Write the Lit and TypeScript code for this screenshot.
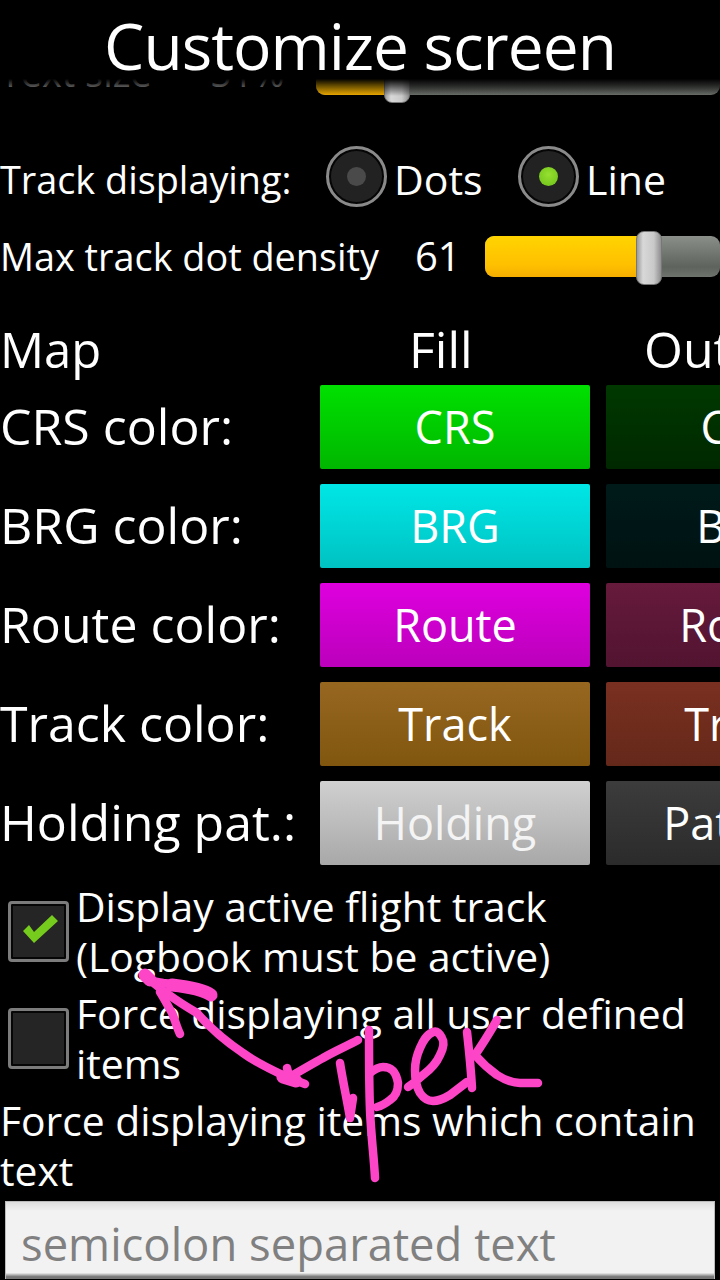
import { LitElement, html, css, svg } from "lit";
import { customElement } from "lit/decorators.js";

const rows = [
  { label: "CRS color:", a: "CRS", b: "CRS", ca: "c-crs", cb: "o-crs" },
  { label: "BRG color:", a: "BRG", b: "BRG", ca: "c-brg", cb: "o-brg" },
  { label: "Route color:", a: "Route", b: "Route", ca: "c-route", cb: "o-route" },
  { label: "Track color:", a: "Track", b: "Track", ca: "c-track", cb: "o-track" },
  { label: "Holding pat.:", a: "Holding", b: "Pattern", ca: "c-hold", cb: "o-hold" },
];

const strokes = [
  "M145 975C160 990 180 1003 197 1013C212 1030 228 1043 243 1053C258 1064 272 1070 287 1077L305 1084",
  "M145 977C152 982 158 982 163 983C175 984 185 985 193 987C202 989 208 992 212 995",
  "M160 992C165 1000 168 1006 172 1013C175 1020 177 1028 180 1034",
  "M288 1078C300 1071 312 1064 323 1058C335 1051 347 1046 358 1040",
  "M287 1068L290 1080",
  "M369 1030C369 1060 369 1085 370 1110C371 1135 374 1158 375 1178",
  "M340 1063C343 1082 347 1100 350 1118L353 1098",
  "M370 1073C375 1069 379 1067 383 1067C391 1067 396 1071 398 1083C398 1092 395 1097 390 1100C385 1104 381 1106 377 1107",
  "M408 1087C414 1083 419 1079 423 1075C431 1069 437 1062 440 1055C444 1047 444 1041 442 1038C439 1032 436 1031 433 1032C426 1035 423 1041 420 1048C416 1057 415 1063 415 1070C415 1080 417 1088 420 1093C424 1099 428 1101 433 1101C439 1101 445 1098 450 1095L467 1082",
  "M467 1032C469 1050 471 1070 472 1088",
  "M497 1020C490 1032 482 1045 475 1055C482 1063 490 1070 497 1075C505 1080 513 1083 520 1083L538 1083",
];

const thick = ["M172 985C190 987 204 990 211 995", "M283 1077L296 1081", "M145 975L150 980"];

@customElement("app-root")
export class AppRoot extends LitElement {
  static styles = css`
    :host {
      display: block;
      width: 720px;
      height: 1280px;
      overflow: hidden;
      position: relative;
      background: #000;
      color: #fff;
      font-family: "Open Sans", "Noto Sans", sans-serif;
    }
    .page { display: flex; flex-direction: column; height: 1280px; }
    .title {
      flex: none;
      height: 78px;
      display: flex;
      align-items: center;
      justify-content: center;
      font-size: 64px;
      line-height: 62px;
      letter-spacing: -1px;
      padding-top: 14px;
      box-sizing: border-box;
      white-space: nowrap;
    }
    .body { flex: 1; min-height: 0; overflow: hidden; display: flex; flex-direction: column; position: relative; }
    .fade {
      position: absolute; left: 0; right: 0; top: 0; height: 18px;
      background: linear-gradient(#000 5%, rgba(0,0,0,0));
    }
    .small { font-size: 37.8px; line-height: 50px; white-space: nowrap; }
    .scrolled {
      flex: none; height: 26px; overflow: hidden; display: flex; align-items: flex-end;
    }
    .scrolled .small { color: #bbb; width: 210px; flex: none; height: 26px; }
    .ghost { display: block; margin-top: -30px; }
    .scrolled .pct { width: 106px; }
    .slider { position: relative; height: 54px; flex: none; display: flex; align-items: center; }
    .scrolled .slider { width: 404px; margin-bottom: 1px; }
    .density .slider { width: 235px; }
    .track {
      height: 41px; width: 100%; overflow: hidden; display: flex; margin-top: -4px;
      background: linear-gradient(#8b8f89, #5f635e 75%, #6f736d);
      border-radius: 9px;
    }
    .fill { height: 100%; background: linear-gradient(#ffd400, #ffc000 70%, #f5ae00); }
    .thumb {
      position: absolute; top: 0; width: 26px; height: 54px; box-sizing: border-box;
      border-radius: 8px; background: linear-gradient(90deg, #9a9a9a, #d8d8d8 25%, #c9c9c9 70%, #8f8f8f);
      border: 1px solid #777;
    }
    .radio-row { flex: none; display: flex; align-items: center; height: 61px; margin-top: 42px; }
    .radio-row .small { margin-top: 6px; }
    .radio-row .lead { width: 326px; flex: none; }
    .radio {
      width: 61px; height: 61px; box-sizing: border-box; flex: none; border-radius: 50%;
      border: 3px solid #8a8a8a; background: #222; box-shadow: inset 0 0 0 2px #050505;
      display: flex; align-items: center; justify-content: center;
    }
    .dot { width: 19px; height: 19px; border-radius: 50%; background: #4a4a4a; }
    .dot.on { background: radial-gradient(circle at 50% 40%, #96e030, #6cc018); }
    .radio-row .opt { margin-left: 7px; font-size: 41px; margin-top: 4px; }
    .radio-row .opt.first { width: 124px; flex: none; }
    .density { flex: none; display: flex; align-items: center; height: 54px; margin-top: 24px; }
    .density .small { margin-top: -2px; }
    .density .lead { width: 415px; flex: none; box-sizing: border-box; }
    .density .val { width: 70px; flex: none; font-size: 40px; margin-top: -4px; }
    .big { font-size: 50px; line-height: 60px; white-space: nowrap; }
    .map-head { flex: none; display: flex; height: 66px; margin-top: 34px; }
    .map-head .c1 { width: 409px; flex: none; box-sizing: border-box; font-size: 49px; }
    .map-head .c2 { width: 235px; flex: none; }
    .rows { flex: none; display: flex; flex-direction: column; gap: 15px; }
    .row { display: flex; align-items: center; height: 84px; }
    .row .lab { width: 320px; flex: none; box-sizing: border-box; margin-bottom: 2px; }
    .btn {
      flex: none; width: 270px; height: 84px; display: flex; align-items: center; justify-content: center;
      border-radius: 2px; font-size: 45px; white-space: nowrap; box-sizing: border-box; padding-bottom: 2px;
    }
    .btn + .btn { margin-left: 16px; }
    .c-crs { background: linear-gradient(#00e000, #00b600); }
    .c-brg { background: linear-gradient(#00e6e6, #00c2c2); }
    .c-route { background: linear-gradient(#de00de, #bb00bb); }
    .c-track { background: linear-gradient(#976720, #80560f); }
    .c-hold { background: linear-gradient(#d0d0d0, #a8a8a8); color: #f4f4f4; }
    .o-crs { background: linear-gradient(#003800, #002800); }
    .o-brg { background: linear-gradient(#001a1a, #001212); }
    .o-route { background: linear-gradient(#661a3c, #521430); }
    .o-track { background: linear-gradient(#7a3020, #64281a); }
    .o-hold { background: linear-gradient(#3c3c3c, #2b2b2b); }
    .check-row { flex: none; display: flex; align-items: center; padding-left: 8px; }
    .check-row.first { margin-top: 18px; margin-bottom: 7px; }
    .box {
      width: 61px; height: 61px; flex: none; box-sizing: border-box; border: 3px solid #7c7c7c;
      border-radius: 4px; background: #252525; box-shadow: inset 0 0 0 2px #060606; margin: 0 7px 4px 0;
      display: flex; align-items: center; justify-content: center;
    }
    .box svg { width: 38px; height: 28px; margin: 0 0 5px 1px; }
    .mid { font-size: 40.8px; line-height: 50px; white-space: nowrap; margin: -2px 0 2px; }
    .full { flex: none; margin: 5px 0 2px; }
    .input {
      flex: none; margin: 4px 5px 0; height: 78px; box-sizing: border-box;
      background: linear-gradient(#dedede, #f2f2f2 12%, #f2f2f2 92%, #777 97%);
      color: #808080; font-size: 45.4px; line-height: 82px; padding-left: 15px; white-space: nowrap;
      border: 1px solid #bbb; border-bottom: none; overflow: hidden;
    }
    .scribble { position: absolute; left: 0; top: 0; width: 720px; height: 1280px; pointer-events: none; }
    .scribble path { fill: none; stroke: #fd45c8; stroke-width: 8.5; stroke-linecap: round; stroke-linejoin: round; }
    .scribble path.thick { stroke-width: 13; }
  `;

  private slider(pct: number, thumb: number) {
    return html`<div class="slider">
      <div class="track"><div class="fill" style="width:${pct}%"></div></div>
      <div class="thumb" style="left:${thumb}px"></div>
    </div>`;
  }

  render() {
    return html`<div class="page">
      <div class="title">Customize screen</div>
      <div class="body">
        <div class="scrolled">
          <div class="small"><span class="ghost">Text size</span></div>
          <div class="small pct"><span class="ghost">51%</span></div>
          ${this.slider(18, 68)}
        </div>
        <div class="fade"></div>
        <div class="radio-row">
          <div class="small lead">Track displaying:</div>
          <div class="radio"><div class="dot"></div></div>
          <div class="small opt first">Dots</div>
          <div class="radio"><div class="dot on"></div></div>
          <div class="small opt">Line</div>
        </div>
        <div class="density">
          <div class="small lead">Max track dot density</div>
          <div class="small val">61</div>
          ${this.slider(66, 151)}
        </div>
        <div class="map-head big">
          <div class="c1">Map</div>
          <div class="c2">Fill</div>
          <div>Outline</div>
        </div>
        <div class="rows">
          ${rows.map(
            (r) => html`<div class="row">
              <div class="lab big">${r.label}</div>
              <div class="btn ${r.ca}">${r.a}</div>
              <div class="btn ${r.cb}">${r.b}</div>
            </div>`
          )}
        </div>
        <div class="check-row first">
          <div class="box">
            <svg viewBox="0 0 38 28"><path d="M3 16L9 10L14 17L32 0L38 6L14 28Z" fill="#76cc1c"/></svg>
          </div>
          <div class="mid">Display active flight track<br />(Logbook must be active)</div>
        </div>
        <div class="check-row">
          <div class="box"></div>
          <div class="mid">Force displaying all user defined<br />items</div>
        </div>
        <div class="full mid">Force displaying items which contain<br />text</div>
        <div class="input">semicolon separated text</div>
      </div>
      <svg class="scribble" viewBox="0 0 720 1280">
        ${strokes.map((d) => svg`<path d=${d}></path>`)}
        ${thick.map((d) => svg`<path class="thick" d=${d}></path>`)}
      </svg>
    </div>`;
  }
}
